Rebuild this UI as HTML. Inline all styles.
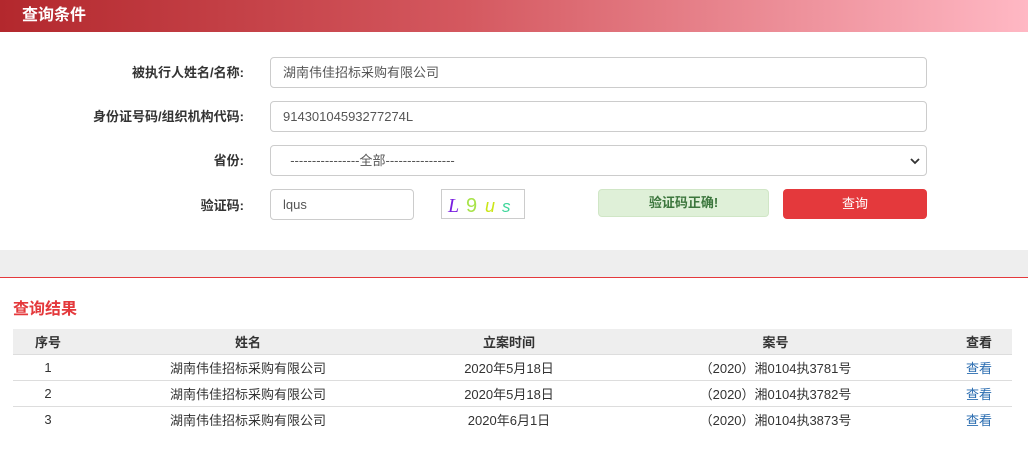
<!DOCTYPE html>
<html><head><meta charset="utf-8"><style>
*{margin:0;padding:0;box-sizing:border-box}
body{width:1028px;height:457px;background:#fff;font-family:"Liberation Sans","Noto Sans CJK SC",sans-serif;font-size:13px;color:#333;position:relative;overflow:hidden}
.hdr{position:absolute;left:0;top:0;width:1028px;height:32px;background:linear-gradient(90deg,#b3282d 0%,#d4585f 45%,#ffb8c4 100%);color:#fff;font-weight:bold;font-size:16px;line-height:32px;padding-left:22px}
.lbl{position:absolute;right:784px;font-weight:bold;font-size:13px;color:#333;text-align:right}
.inp{position:absolute;border:1px solid #ccc;border-radius:4px;background:#fff;font-size:13px;color:#555;padding-left:12px;line-height:29px;height:31px}
.a{position:absolute}
.band{position:absolute;left:0;top:250px;width:1028px;height:28px;background:#eee}
.rl{position:absolute;left:0;top:277px;width:1028px;height:1px;background:#e4393c}
table{position:absolute;left:13px;top:329px;width:999px;border-collapse:collapse;font-size:13px}
th{background:#eee;height:25px;font-weight:bold;color:#333}
td{height:26px;border-top:1px solid #ddd;text-align:center;color:#333}
th,td{text-align:center;padding:0}
a{color:#2a6cb0;text-decoration:none}
</style></head><body>
<div class="hdr">查询条件</div>
<div class="lbl" style="top:62px">被执行人姓名/名称:</div>
<div class="inp" style="left:270px;top:57px;width:657px">湖南伟佳招标采购有限公司</div>
<div class="lbl" style="top:106px">身份证号码/组织机构代码:</div>
<div class="inp" style="left:270px;top:101px;width:657px">91430104593277274L</div>
<div class="lbl" style="top:150px">省份:</div>
<div class="inp" style="left:270px;top:145px;width:657px">&nbsp;&nbsp;----------------全部----------------
<svg style="position:absolute;right:6px;top:11px" width="10" height="8" viewBox="0 0 10 8"><path d="M1 2 L5 6 L9 2" stroke="#333" stroke-width="1.8" fill="none"/></svg></div>
<div class="lbl" style="top:195px">验证码:</div>
<div class="inp" style="left:270px;top:189px;width:144px">lqus</div>
<div class="a" style="left:441px;top:189px;width:84px;height:30px;border:1px solid #ccc;background:#fff">
<svg width="82" height="28"><text x="6" y="22" font-size="20" fill="#7a1fe0" font-family="Liberation Serif,serif" font-style="italic">L</text><text x="24" y="22" font-size="20" fill="#a8e34a" font-family="Liberation Sans,sans-serif">9</text><text x="43" y="22" font-size="18" fill="#cbe617" font-style="italic">u</text><text x="60" y="22" font-size="17" fill="#3ed69a" font-style="italic">s</text></svg></div>
<div class="a" style="left:598px;top:189px;width:171px;height:28px;background:#dff0d8;border:1px solid #d0e6c6;border-radius:4px;color:#3c763d;font-weight:bold;text-align:center;line-height:26px">验证码正确!</div>
<div class="a" style="left:783px;top:189px;width:144px;height:30px;background:#e4393c;border-radius:4px;color:#fff;text-align:center;line-height:30px">查询</div>
<div class="band"></div>
<div class="rl"></div>
<div class="a" style="left:13px;top:295px;color:#e4393c;font-weight:bold;font-size:16px">查询结果</div>
<table>
<tr><th style="width:70px">序号</th><th style="width:330px">姓名</th><th style="width:192px">立案时间</th><th style="width:341px">案号</th><th>查看</th></tr>
<tr><td>1</td><td>湖南伟佳招标采购有限公司</td><td>2020年5月18日</td><td>（2020）湘0104执3781号</td><td><a>查看</a></td></tr>
<tr><td>2</td><td>湖南伟佳招标采购有限公司</td><td>2020年5月18日</td><td>（2020）湘0104执3782号</td><td><a>查看</a></td></tr>
<tr><td>3</td><td>湖南伟佳招标采购有限公司</td><td>2020年6月1日</td><td>（2020）湘0104执3873号</td><td><a>查看</a></td></tr>
</table>
</body></html>
